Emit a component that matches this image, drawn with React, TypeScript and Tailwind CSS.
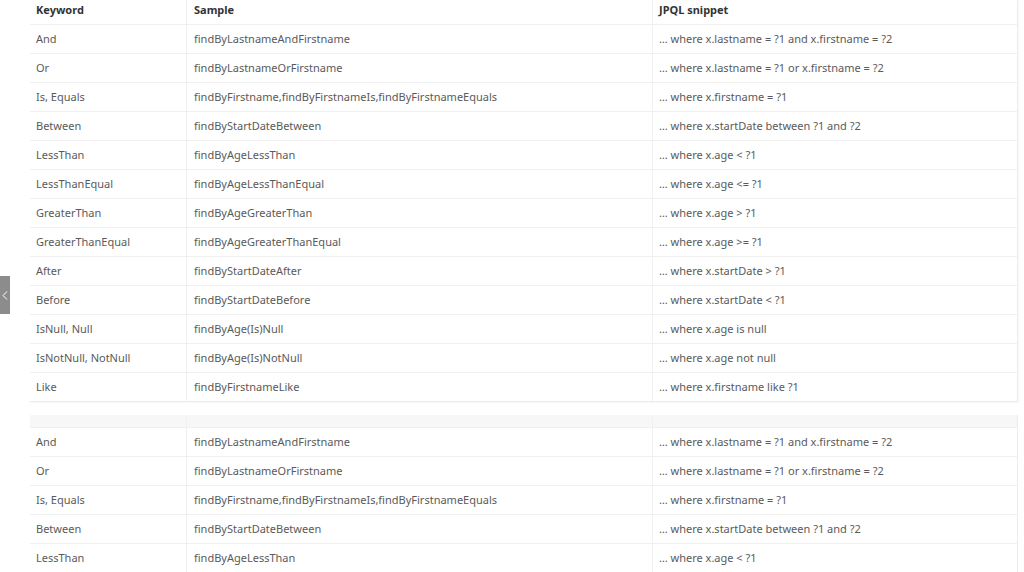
import React from "react";

const rows: [string, string, string][] = [
  ["And", "findByLastnameAndFirstname", "… where x.lastname = ?1 and x.firstname = ?2"],
  ["Or", "findByLastnameOrFirstname", "… where x.lastname = ?1 or x.firstname = ?2"],
  ["Is, Equals", "findByFirstname,findByFirstnameIs,findByFirstnameEquals", "… where x.firstname = ?1"],
  ["Between", "findByStartDateBetween", "… where x.startDate between ?1 and ?2"],
  ["LessThan", "findByAgeLessThan", "… where x.age < ?1"],
  ["LessThanEqual", "findByAgeLessThanEqual", "… where x.age <= ?1"],
  ["GreaterThan", "findByAgeGreaterThan", "… where x.age > ?1"],
  ["GreaterThanEqual", "findByAgeGreaterThanEqual", "… where x.age >= ?1"],
  ["After", "findByStartDateAfter", "… where x.startDate > ?1"],
  ["Before", "findByStartDateBefore", "… where x.startDate < ?1"],
  ["IsNull, Null", "findByAge(Is)Null", "… where x.age is null"],
  ["IsNotNull, NotNull", "findByAge(Is)NotNull", "… where x.age not null"],
  ["Like", "findByFirstnameLike", "… where x.firstname like ?1"],
];

const rows2 = rows.slice(0, 5);

function Row({ r }: { r: [string, string, string] }) {
  return (
    <div className="grid grid-cols-[157px_466px_365px] h-[29px] border-t border-[#f0f0f0] text-[#5a5a5a]">
      <div className="flex items-center pl-[6px] border-r border-[#f0f0f0]">{r[0]}</div>
      <div className="flex items-center pl-[7px] border-r border-[#f0f0f0]">{r[1]}</div>
      <div className="flex items-center pl-[6px]">{r[2]}</div>
    </div>
  );
}

export default function App() {
  return (
    <div
      className="relative w-[1024px] h-[572px] overflow-hidden bg-white text-[11px]"
      style={{ fontFamily: "'Noto Sans', sans-serif" }}
    >
      <div className="absolute left-0 top-[276px] w-[10px] h-[38px] bg-[#8c8c8c] flex items-center justify-center">
        <svg width="6" height="9" viewBox="0 0 6 9" fill="none">
          <polyline points="5,0.5 1,4.5 5,8.5" stroke="#ffffff" strokeWidth="1" />
        </svg>
      </div>
      <div className="ml-[30px] w-[988px]">
        <div className="border-b border-r border-[#ececec] shadow-[1px_1px_2px_rgba(0,0,0,0.04)]">
          <div className="grid grid-cols-[157px_466px_365px] h-[24px] font-bold text-[#333]">
            <div className="flex items-start pt-[2px] pl-[6px] border-r border-[#f0f0f0]">Keyword</div>
            <div className="flex items-start pt-[2px] pl-[7px] border-r border-[#f0f0f0]">Sample</div>
            <div className="flex items-start pt-[2px] pl-[6px]">JPQL snippet</div>
          </div>
          {rows.map((r, i) => (
            <Row key={i} r={r} />
          ))}
        </div>
        <div className="mt-[13px] border-r border-[#ececec]">
          <div className="grid grid-cols-[157px_466px_365px] h-[12px] bg-[#f7f7f7]">
            <div className="border-r border-[#f0f0f0]" />
            <div className="border-r border-[#f0f0f0]" />
            <div />
          </div>
          {rows2.map((r, i) => (
            <Row key={i} r={r} />
          ))}
        </div>
      </div>
    </div>
  );
}
